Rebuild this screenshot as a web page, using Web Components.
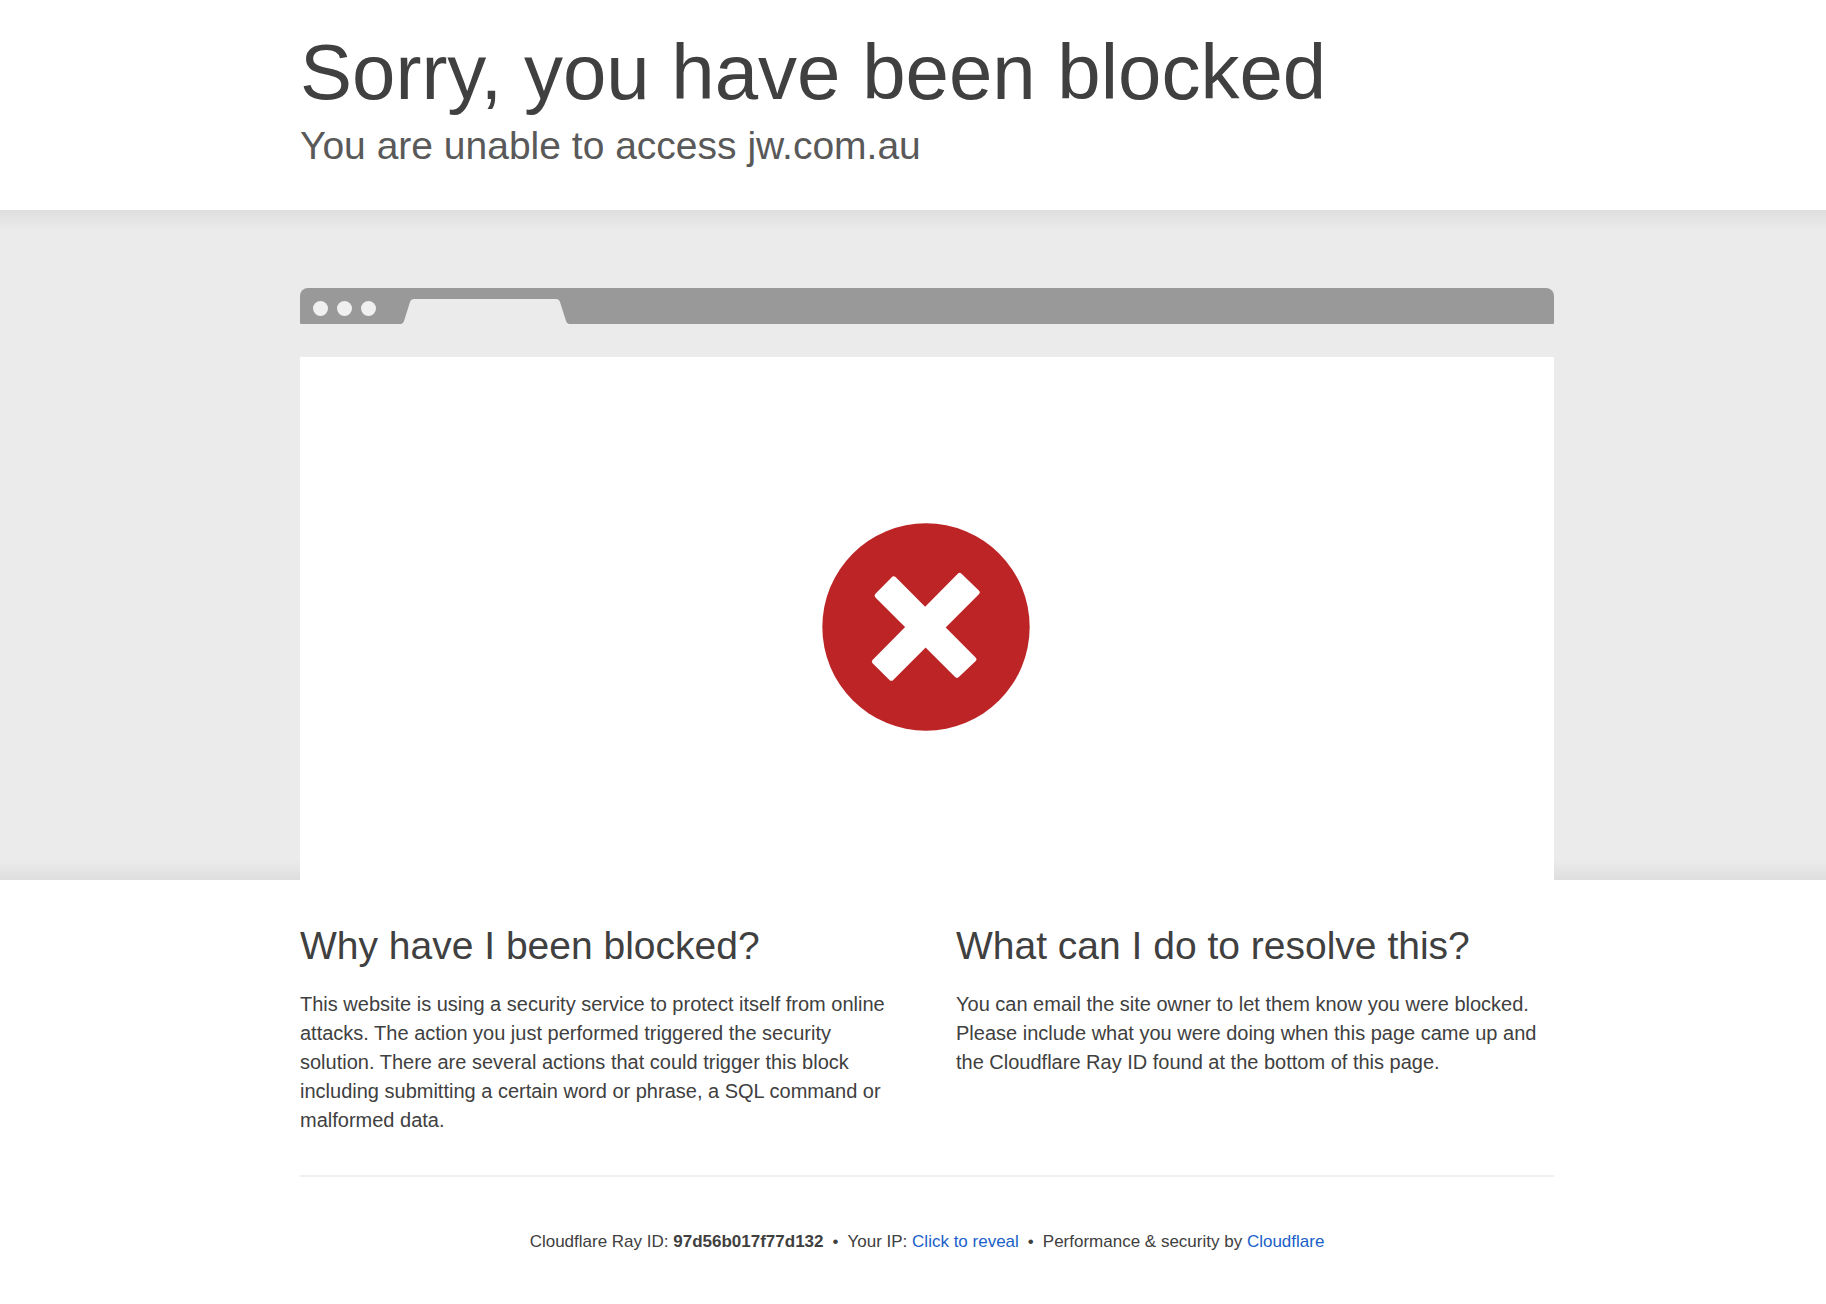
<!DOCTYPE html>
<html lang="en">
<head>
<meta charset="utf-8">
<meta name="viewport" content="width=device-width, initial-scale=1">
<title>Attention Required! | Cloudflare</title>
<style>
  body { margin: 0; background: #fff; color: #404040; font-family: "Liberation Sans", Arial, sans-serif; }
</style>
</head>
<body>
<block-page></block-page>
<script>
function define(name, html) {
  const template = document.createElement('template');
  template.innerHTML = html;
  customElements.define(name, class extends HTMLElement {
    constructor() {
      super();
      this.attachShadow({ mode: 'open' }).append(template.content.cloneNode(true));
    }
  });
}

define('page-wrapper', `
  <style>
    :host { display: block; padding-left: 28px; }
    div { max-width: 1254px; margin: 0 auto; }
  </style>
  <div><slot></slot></div>`);

define('page-header', `
  <style>
    :host { display: block; padding: 24px 0 32px; }
    h1, p { margin: 0; font-weight: 400; }
    h1 { font-size: 78px; line-height: 96px; }
    p { font-size: 39px; line-height: 52px; padding-bottom: 6px; color: #595959; }
  </style>
  <page-wrapper>
    <h1><slot name="title"></slot></h1>
    <p><slot name="subtitle"></slot></p>
  </page-wrapper>`);

define('error-icon', `
  <style>:host, svg { display: block; width: 208px; height: 208px; }</style>
  <svg viewBox="0 0 624 624" role="img" aria-label="Blocked">
    <circle cx="312" cy="312" r="311" fill="#bd2426"/>
    <g fill="#fff" stroke="#fff" stroke-width="16" stroke-linejoin="round">
      <path d="M215 168 L166 218 L405 456 L455 409 Z"/>
      <path d="M413 158 L465 208 L208 465 L158 416 Z"/>
    </g>
  </svg>`);

define('browser-window', `
  <style>
    :host { display: block; }
    .bar { display: flex; align-items: flex-end; height: 36px; padding-left: 13px; background: #999; border-radius: 8px 8px 1px 1px; }
    .dots { display: flex; gap: 9px; margin: 0 25px 8px 0; }
    i { width: 15px; height: 15px; border-radius: 50%; background: #f0f0f0; }
    svg { display: block; width: 168px; height: 25px; }
    .screen { display: flex; justify-content: center; align-items: flex-start; margin-top: 33px; padding: 166px 2px 149px 0; background: #fff; }
  </style>
  <div class="bar">
    <div class="dots"><i></i><i></i><i></i></div>
    <svg viewBox="0 0 168 25"><path d="M0 25 Q2 25 3 22 L9 3 Q10 0 13 0 H155 Q158 0 159 3 L165 22 Q166 25 168 25 Z" fill="#ebebeb"/></svg>
  </div>
  <div class="screen"><slot></slot></div>`);

define('page-stage', `
  <style>
    :host { display: block; padding-top: 78px;
      background: linear-gradient(to top, #dedede, #ebebeb 3%, #ebebeb 97%, #dedede); }
  </style>
  <page-wrapper><slot></slot></page-wrapper>`);

define('info-column', `
  <style>
    :host { display: block; flex: 1; }
    h2 { margin: 0 0 19px; font-size: 39px; line-height: 50px; font-weight: 400; }
    p { margin: 0; font-size: 20px; line-height: 29px; }
  </style>
  <h2><slot name="heading"></slot></h2>
  <p><slot></slot></p>`);

define('info-columns', `
  <style>
    :host { display: flex; gap: 58px; padding: 41px 0 40px; }
  </style>
  <slot></slot>`);

define('page-footer', `
  <style>
    :host { display: flex; flex-wrap: wrap; justify-content: center; gap: 9px; padding: 53px 0; border-top: 2px solid #efefef; font-size: 17px; line-height: 24px; }
    a, button { color: #1a5fc8; text-decoration: none; }
    button { border: 0; padding: 0; background: none; font: inherit; cursor: pointer; }
    a:hover, button:hover { text-decoration: underline; }
  </style>
  <span>Cloudflare Ray ID: <strong>97d56b017f77d132</strong></span>
  <span>•</span>
  <span>Your IP: <button type="button">Click to reveal</button></span>
  <span>•</span>
  <span>Performance &amp; security by <a href="#">Cloudflare</a></span>`);

define('block-page', `
  <style>:host { display: block; }</style>
  <page-header>
    <span slot="title">Sorry, you have been blocked</span>
    <span slot="subtitle">You are unable to access jw.com.au</span>
  </page-header>
  <page-stage>
    <browser-window><error-icon></error-icon></browser-window>
  </page-stage>
  <page-wrapper>
    <info-columns>
      <info-column>
        <span slot="heading">Why have I been blocked?</span>
        This website is using a security service to protect itself from online attacks. The action you just performed triggered the security solution. There are several actions that could trigger this block including submitting a certain word or phrase, a SQL command or malformed data.
      </info-column>
      <info-column>
        <span slot="heading">What can I do to resolve this?</span>
        You can email the site owner to let them know you were blocked. Please include what you were doing when this page came up and the Cloudflare Ray ID found at the bottom of this page.
      </info-column>
    </info-columns>
    <page-footer></page-footer>
  </page-wrapper>`);
</script>
</body>
</html>
